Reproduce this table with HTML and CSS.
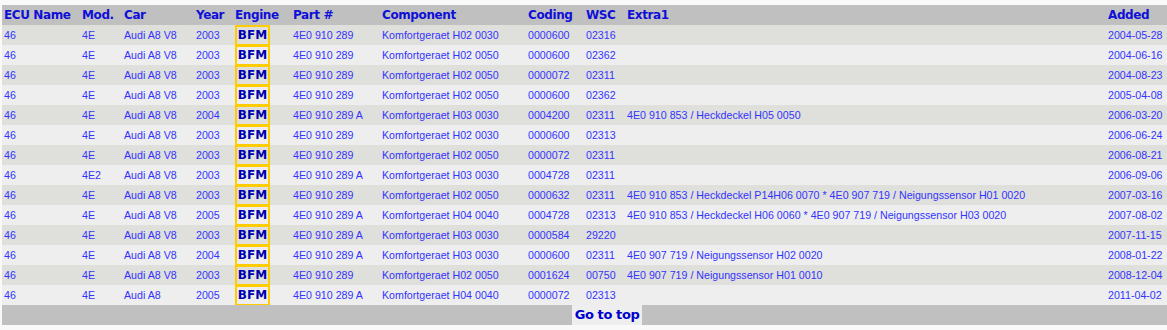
FILE: index.html
```html
<!DOCTYPE html>
<html>
<head>
<meta charset="utf-8">
<link rel="stylesheet" href="styles.css">
</head>
<body>
<table class="ecu">
<colgroup>
<col class="c1"><col class="c2"><col class="c3"><col class="c4"><col class="c5"><col class="c6"><col class="c7"><col class="c8"><col class="c9"><col class="c10"><col class="c11">
</colgroup>
<thead>
<tr><th>ECU Name</th><th>Mod.</th><th>Car</th><th>Year</th><th>Engine</th><th>Part #</th><th>Component</th><th>Coding</th><th>WSC</th><th>Extra1</th><th>Added</th></tr>
</thead>
<tbody>
<tr><td>46</td><td>4E</td><td>Audi A8 V8</td><td>2003</td><td><span class="eng">BFM</span></td><td>4E0 910 289</td><td>Komfortgeraet H02 0030</td><td>0000600</td><td>02316</td><td></td><td>2004-05-28</td></tr>
<tr><td>46</td><td>4E</td><td>Audi A8 V8</td><td>2003</td><td><span class="eng">BFM</span></td><td>4E0 910 289</td><td>Komfortgeraet H02 0050</td><td>0000600</td><td>02362</td><td></td><td>2004-06-16</td></tr>
<tr><td>46</td><td>4E</td><td>Audi A8 V8</td><td>2003</td><td><span class="eng">BFM</span></td><td>4E0 910 289</td><td>Komfortgeraet H02 0050</td><td>0000072</td><td>02311</td><td></td><td>2004-08-23</td></tr>
<tr><td>46</td><td>4E</td><td>Audi A8 V8</td><td>2003</td><td><span class="eng">BFM</span></td><td>4E0 910 289</td><td>Komfortgeraet H02 0050</td><td>0000600</td><td>02362</td><td></td><td>2005-04-08</td></tr>
<tr><td>46</td><td>4E</td><td>Audi A8 V8</td><td>2004</td><td><span class="eng">BFM</span></td><td>4E0 910 289 A</td><td>Komfortgeraet H03 0030</td><td>0004200</td><td>02311</td><td>4E0 910 853 / Heckdeckel H05 0050</td><td>2006-03-20</td></tr>
<tr><td>46</td><td>4E</td><td>Audi A8 V8</td><td>2003</td><td><span class="eng">BFM</span></td><td>4E0 910 289</td><td>Komfortgeraet H02 0030</td><td>0000600</td><td>02313</td><td></td><td>2006-06-24</td></tr>
<tr><td>46</td><td>4E</td><td>Audi A8 V8</td><td>2003</td><td><span class="eng">BFM</span></td><td>4E0 910 289</td><td>Komfortgeraet H02 0050</td><td>0000072</td><td>02311</td><td></td><td>2006-08-21</td></tr>
<tr><td>46</td><td>4E2</td><td>Audi A8 V8</td><td>2003</td><td><span class="eng">BFM</span></td><td>4E0 910 289 A</td><td>Komfortgeraet H03 0030</td><td>0004728</td><td>02311</td><td></td><td>2006-09-06</td></tr>
<tr><td>46</td><td>4E</td><td>Audi A8 V8</td><td>2003</td><td><span class="eng">BFM</span></td><td>4E0 910 289</td><td>Komfortgeraet H02 0050</td><td>0000632</td><td>02311</td><td>4E0 910 853 / Heckdeckel P14H06 0070 * 4E0 907 719 / Neigungssensor H01 0020</td><td>2007-03-16</td></tr>
<tr><td>46</td><td>4E</td><td>Audi A8 V8</td><td>2005</td><td><span class="eng">BFM</span></td><td>4E0 910 289 A</td><td>Komfortgeraet H04 0040</td><td>0004728</td><td>02313</td><td>4E0 910 853 / Heckdeckel H06 0060 * 4E0 907 719 / Neigungssensor H03 0020</td><td>2007-08-02</td></tr>
<tr><td>46</td><td>4E</td><td>Audi A8 V8</td><td>2003</td><td><span class="eng">BFM</span></td><td>4E0 910 289 A</td><td>Komfortgeraet H03 0030</td><td>0000584</td><td>29220</td><td></td><td>2007-11-15</td></tr>
<tr><td>46</td><td>4E</td><td>Audi A8 V8</td><td>2004</td><td><span class="eng">BFM</span></td><td>4E0 910 289 A</td><td>Komfortgeraet H03 0030</td><td>0000600</td><td>02311</td><td>4E0 907 719 / Neigungssensor H02 0020</td><td>2008-01-22</td></tr>
<tr><td>46</td><td>4E</td><td>Audi A8 V8</td><td>2003</td><td><span class="eng">BFM</span></td><td>4E0 910 289</td><td>Komfortgeraet H02 0050</td><td>0001624</td><td>00750</td><td>4E0 907 719 / Neigungssensor H01 0010</td><td>2008-12-04</td></tr>
<tr><td>46</td><td>4E</td><td>Audi A8</td><td>2005</td><td><span class="eng">BFM</span></td><td>4E0 910 289 A</td><td>Komfortgeraet H04 0040</td><td>0000072</td><td>02313</td><td></td><td>2011-04-02</td></tr>
</tbody>
<tfoot>
<tr><td colspan="11" class="foot"><a class="top" href="#">Go to top</a></td></tr>
</tfoot>
</table>
</body>
</html>
```
FILE: styles.css
```css
html {
  background: #f9f9f9;
  overflow-x: hidden;
}
body {
  margin: 5px 0 0 2px;
}
.ecu {
  border-collapse: collapse;
  table-layout: fixed;
  width: 1210px;
}
.c1 { width: 78px; }
.c2 { width: 42px; }
.c3 { width: 72px; }
.c4 { width: 39px; }
.c5 { width: 58px; }
.c6 { width: 89px; }
.c7 { width: 146px; }
.c8 { width: 58px; }
.c9 { width: 41px; }
.c10 { width: 481px; }
.c11 { width: 106px; }
.ecu th {
  background: #c0c0c0;
  color: #0f0fd8;
  font-family: "DejaVu Sans", Verdana, sans-serif;
  font-weight: bold;
  font-size: 12px;
  letter-spacing: -0.4px;
  text-align: left;
  height: 20px;
  padding: 0 0 0 2px;
  white-space: nowrap;
  overflow: hidden;
}
.ecu td {
  font-family: "Liberation Sans", Arial, sans-serif;
  font-size: 8pt;
  color: #3333ff;
  height: 20px;
  padding: 0 0 0 2px;
  white-space: nowrap;
  overflow: visible;
  vertical-align: middle;
}
.ecu tbody tr:nth-child(odd) {
  background: #dfdfdb;
}
.ecu tbody tr:nth-child(even) {
  background: #eeeeee;
}
.eng {
  display: block;
  box-sizing: border-box;
  width: 35px;
  height: 21px;
  margin-bottom: -1px;
  border: 2px solid #ffcc00;
  font-family: "DejaVu Sans", Verdana, sans-serif;
  font-weight: bold;
  font-size: 12px;
  line-height: 17px;
  text-align: center;
  color: #0000b0;
}
.ecu td.foot {
  background: #c0c0c0;
  text-align: center;
  padding: 0;
  height: 20px;
}
.top {
  display: inline-block;
  background: #eeeeee;
  padding: 0 3px;
  height: 20px;
  line-height: 20px;
  font-family: "DejaVu Sans", Verdana, sans-serif;
  font-weight: bold;
  font-size: 13px;
  letter-spacing: -0.4px;
  color: #0000cc;
  text-decoration: none;
  vertical-align: top;
}
```
